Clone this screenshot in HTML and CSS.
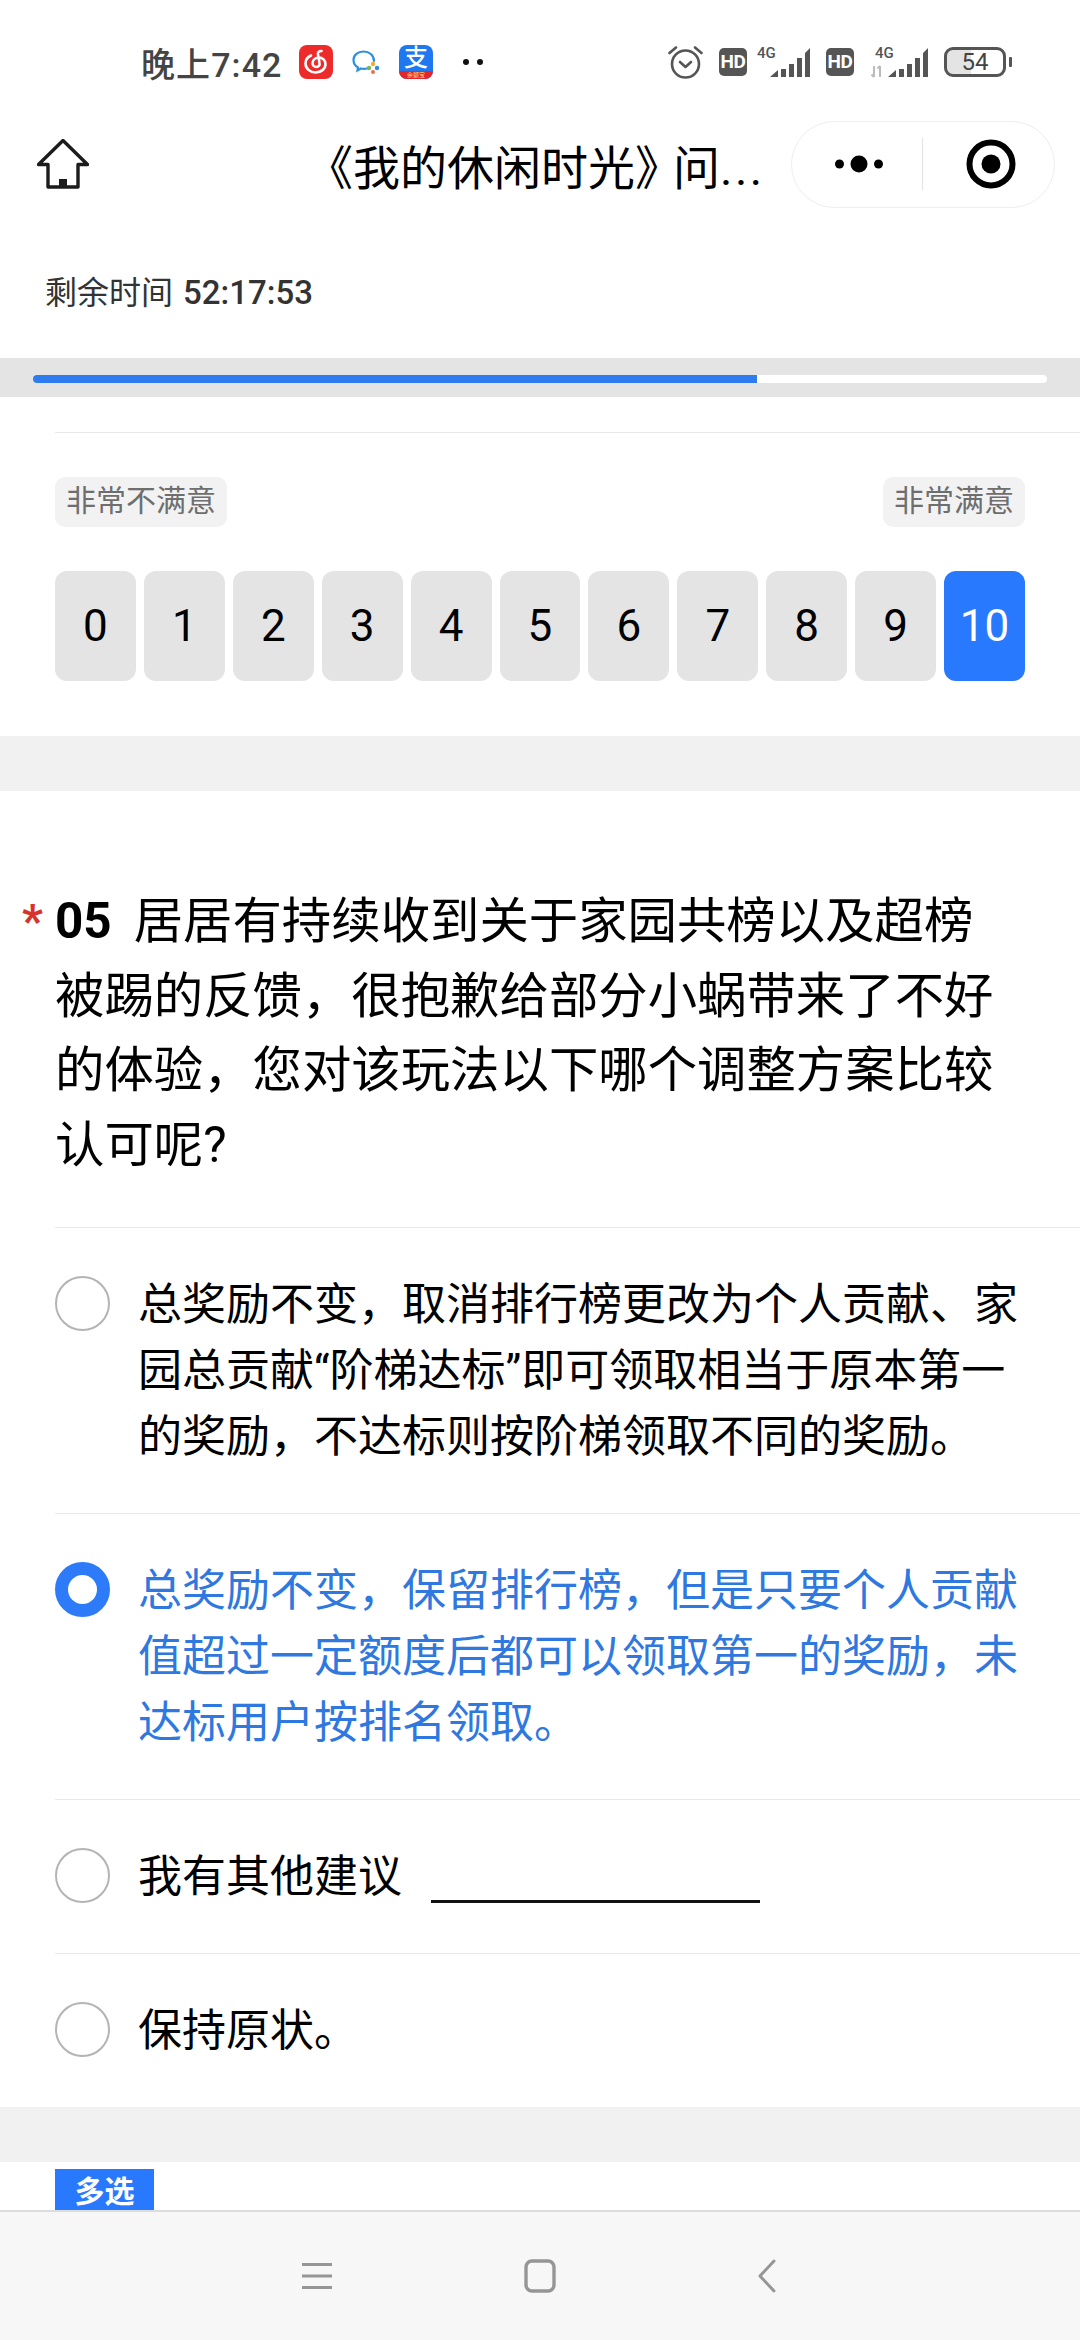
FILE: index.html
```html
<!DOCTYPE html>
<html lang="zh-CN">
<head>
  <meta charset="UTF-8">
  <meta name="viewport" content="width=device-width, initial-scale=1.0">
  <title>《我的休闲时光》问卷</title>
  <link rel="stylesheet" href="styles.css">
</head>
<body>
<div class="status-bar">
  <div class="status-left">
    <span class="clock">晚上7:42</span>
    <svg class="app-icon" width="34" height="34" viewBox="0 0 34 34">
      <rect width="34" height="34" rx="8" fill="#ee2b2b"/>
      <path d="M12 10.500C8.500 12 6.500 15 6.500 18.500c0 5 4.500 9 10 9s10-3.500 10-8.500c0-3.500-3-6.500-6.500-6.500-3.500 0-6.500 2.500-6.500 5.500 0 2.500 1.800 4 3.800 4 2.500 0 3.700-2 3.200-4L19 9.500c-.5-2 .5-3.500 3.500-3.500" fill="none" stroke="#fff" stroke-width="2.600" stroke-linecap="round"/>
    </svg>
    <svg class="bubble-icon" width="28" height="24" viewBox="0 0 28 24">
      <path d="M22 11C22 5 17 1.500 11.500 1.500S1.500 5 1.500 10c0 3.500 2 6 4.500 7.500l-.5 3 3.500-2c2 .4 4 .4 6 0" fill="none" stroke="#2c8fe0" stroke-width="2.200" stroke-linecap="round"/>
      <circle cx="21" cy="14" r="2.200" fill="#f0b030"/>
      <circle cx="25" cy="18" r="2.200" fill="#2c8fe0"/>
      <circle cx="21" cy="22" r="2" fill="#e9704a"/>
      <circle cx="17" cy="18" r="2.200" fill="#76b852"/>
    </svg>
    <div class="alipay">
      <span class="alipay-mark">支</span>
      <span class="alipay-strip">余额宝</span>
    </div>
    <span class="more-dots"><i></i><i></i></span>
  </div>
  <div class="status-right">
    <svg class="alarm" width="35" height="34" viewBox="0 0 35 34">
      <circle cx="17.500" cy="19" r="13.500" fill="none" stroke="#555" stroke-width="2.600"/>
      <path d="M12 17l5.500 5 5.500-5" fill="none" stroke="#555" stroke-width="2.600" stroke-linecap="round" stroke-linejoin="round"/>
      <path d="M1.500 8L8 2.500M33.500 8L27 2.500" fill="none" stroke="#555" stroke-width="2.600" stroke-linecap="round"/>
    </svg>
    <span class="hd">HD</span>
    <svg class="signal" width="53" height="34" viewBox="0 0 53 34">
      <text x="0" y="13" class="net-label">4G</text>
      <path d="M13 32l8-7v7zM24 24h5v8h-5zM32 19h5v13h-5zM40 13h5v19h-5zM48 8l5-5v29h-5z" fill="#555"/>
    </svg>
    <span class="hd hd-second">HD</span>
    <svg class="signal signal-second" width="57" height="34" viewBox="0 0 57 34">
      <text x="4" y="13" class="net-label">4G</text>
      <path d="M3 21v11M0.500 29.500L3 32M9 32V21M6.500 23.500L9 21" fill="none" stroke="#bbb" stroke-width="2"/>
      <path d="M17 32l8-7v7zM28 24h5v8h-5zM36 19h5v13h-5zM44 13h5v19h-5zM52 8l5-5v29h-5z" fill="#555"/>
    </svg>
    <div class="battery">
      <span class="battery-body">54</span>
      <span class="battery-tip"></span>
    </div>
  </div>
</div>

<div class="nav-bar">
  <svg class="home-icon" width="52" height="50" viewBox="0 0 52 50">
    <path d="M26 1.500L1.500 25.500h9.500v22.500h30V25.500h9.500z" fill="none" stroke="#1c1c1c" stroke-width="3.400" stroke-linejoin="round"/>
    <rect x="22" y="40" width="8" height="8" fill="#1c1c1c"/>
  </svg>
  <div class="nav-title">《我的休闲时光<span class="close-quote">》</span>问<span class="title-dots">...</span></div>
  <div class="capsule">
    <div class="capsule-part capsule-more">
      <svg width="48" height="18" viewBox="0 0 48 18">
        <circle cx="4.500" cy="9" r="4.500" fill="#000"/>
        <circle cx="24" cy="9" r="8.500" fill="#000"/>
        <circle cx="43.500" cy="9" r="4.500" fill="#000"/>
      </svg>
    </div>
    <div class="capsule-line"></div>
    <div class="capsule-part capsule-close">
      <svg width="50" height="50" viewBox="0 0 50 50">
        <circle cx="25" cy="25" r="21.500" fill="none" stroke="#000" stroke-width="6"/>
        <circle cx="25" cy="25" r="9.500" fill="#000"/>
      </svg>
    </div>
  </div>
</div>

<div class="timer">剩余时间 <b>52:17:53</b></div>

<div class="progress-band">
  <div class="progress-track">
    <div class="progress-fill" style="width: 71.400%"></div>
  </div>
</div>

<div class="main">
  <section class="card rating-card">
    <div class="rating-labels">
      <span class="pill">非常不满意</span>
      <span class="pill">非常满意</span>
    </div>
    <div class="scale">
      <div class="scale-btn">0</div>
      <div class="scale-btn">1</div>
      <div class="scale-btn">2</div>
      <div class="scale-btn">3</div>
      <div class="scale-btn">4</div>
      <div class="scale-btn">5</div>
      <div class="scale-btn">6</div>
      <div class="scale-btn">7</div>
      <div class="scale-btn">8</div>
      <div class="scale-btn">9</div>
      <div class="scale-btn scale-btn-on">10</div>
    </div>
  </section>

  <section class="card question-card">
    <div class="question">
      <span class="required">*</span>
      <div class="question-text"><b class="question-no">05</b>居居有持续收到关于家园共榜以及超榜被踢的反馈，很抱歉给部分小蜗带来了不好的体验，您对该玩法以下哪个调整方案比较认可呢?</div>
    </div>
    <div class="options">
      <div class="option">
        <span class="radio"></span>
        <div class="option-text">总奖励不变，取消排行榜更改为个人贡献、家园总贡献“阶梯达标”即可领取相当于原本第一的奖励，不达标则按阶梯领取不同的奖励。</div>
      </div>
      <div class="option option-on">
        <span class="radio"></span>
        <div class="option-text">总奖励不变，保留排行榜，但是只要个人贡献值超过一定额度后都可以领取第一的奖励，未达标用户按排名领取。</div>
      </div>
      <div class="option">
        <span class="radio"></span>
        <div class="option-text">我有其他建议</div>
        <span class="fill-line"></span>
      </div>
      <div class="option">
        <span class="radio"></span>
        <div class="option-text">保持原状。</div>
      </div>
    </div>
  </section>

  <section class="card next-card">
    <span class="type-tag">多选</span>
  </section>
</div>

<div class="system-nav">
  <svg width="32" height="28" viewBox="0 0 32 28">
    <path d="M1 2.500h30M1 14h30M1 25.500h30" stroke="#969696" stroke-width="3"/>
  </svg>
  <svg class="nav-square" width="32" height="34" viewBox="0 0 32 34">
    <rect x="2" y="2" width="28" height="30" rx="6" fill="none" stroke="#969696" stroke-width="3.400"/>
  </svg>
  <svg width="20" height="34" viewBox="0 0 20 34">
    <path d="M17 2L3 17l14 15" fill="none" stroke="#969696" stroke-width="3" stroke-linecap="round" stroke-linejoin="round"/>
  </svg>
</div>
</body>
</html>
```

FILE: styles.css
```css
body {
  font-family: Roboto, "Noto Sans CJK SC", sans-serif;
  background-color: #fff;
  color: #000;
  margin: 0;
  padding: 0;
  height: 2340px;
  display: flex;
  flex-direction: column;
  overflow: hidden;
}

/* status bar */
.status-bar {
  height: 120px;
  flex: none;
  display: flex;
  justify-content: space-between;
  align-items: center;
  padding: 4px 68px 0 141px;
  box-sizing: border-box;
}
.status-left,
.status-right {
  display: flex;
  align-items: center;
}
.clock {
  font-size: 34px;
  font-weight: 500;
  letter-spacing: 1.100px;
  color: #444;
  width: 158px;
}
.bubble-icon {
  margin: 0 19px;
}
.alipay {
  width: 34px;
  height: 34px;
  display: flex;
  flex-direction: column;
  align-items: center;
  border-radius: 8px;
  background-color: #1f78f0;
}
.alipay-mark {
  height: 26px;
  color: #fff;
  font-size: 24px;
  font-weight: 500;
  line-height: 26px;
}
.alipay-strip {
  width: 100%;
  height: 8px;
  border-radius: 0 0 8px 8px;
  background-color: #e3262b;
  color: #ffd98a;
  font-size: 6px;
  line-height: 8px;
  text-align: center;
}
.more-dots {
  display: flex;
  gap: 8px;
  margin-left: 30px;
}
.more-dots i {
  width: 6px;
  height: 6px;
  border-radius: 50%;
  background-color: #111;
}
.hd {
  width: 28px;
  height: 28px;
  margin-left: 16px;
  border-radius: 5px;
  background-color: #555;
  color: #fff;
  font-size: 19px;
  font-weight: 700;
  line-height: 28px;
  text-align: center;
  letter-spacing: -0.5px;
}
.signal {
  margin-left: 10px;
}
.hd-second {
  margin-left: 16px;
}
.signal-second {
  margin-left: 17px;
}
.net-label {
  font-size: 15px;
  font-weight: 500;
  fill: #555;
}
.battery {
  display: flex;
  align-items: center;
  gap: 3px;
  margin-left: 16px;
}
.battery-body {
  width: 62px;
  height: 30px;
  box-sizing: border-box;
  border: 3px solid #555;
  border-radius: 9px;
  background: linear-gradient(to right, #e4e4e4 0 24px, #fff 24px);
  background-clip: padding-box;
  color: #444;
  font-size: 24px;
  line-height: 24px;
  text-align: center;
}
.battery-tip {
  width: 3px;
  height: 10px;
  border-radius: 1px;
  background-color: #555;
}

/* title bar */
.nav-bar {
  height: 88px;
  flex: none;
  display: flex;
  align-items: center;
  padding: 0 25px 0 37px;
}
.home-icon {
  flex: none;
}
.nav-title {
  flex: 1;
  font-size: 47px;
  color: #000;
  white-space: nowrap;
  padding-left: 217px;
}
.close-quote {
  letter-spacing: -9px;
}
.title-dots {
  letter-spacing: 2.500px;
}
.capsule {
  width: 264px;
  height: 87px;
  flex: none;
  box-sizing: border-box;
  border: 1px solid #eee;
  border-radius: 44px;
  display: flex;
  align-items: center;
}
.capsule-part {
  flex: 1;
  display: flex;
  justify-content: center;
}
.capsule-more {
  padding-left: 4px;
}
.capsule-close {
  padding-left: 6px;
}
.capsule-line {
  width: 1px;
  height: 52px;
  background-color: #e2e2e2;
}

/* time left and progress */
.timer {
  height: 150px;
  flex: none;
  box-sizing: border-box;
  padding: 65px 0 0 45px;
  font-size: 32px;
  line-height: 40px;
  color: #333;
}
.timer b {
  font-size: 33px;
  font-weight: 500;
  margin-left: 2px;
}
.progress-band {
  height: 39px;
  flex: none;
  box-sizing: border-box;
  padding: 17px 33px 0;
  background-color: #e4e4e4;
}
.progress-track {
  height: 8px;
  border-radius: 4px;
  background-color: #fff;
  overflow: hidden;
}
.progress-fill {
  height: 100%;
  background-color: #2f7bf0;
}

/* survey */
.main {
  flex: 1;
  min-height: 0;
  overflow: hidden;
  background-color: #f1f1f1;
}
.card {
  background-color: #fff;
}
.rating-card {
  margin-bottom: 55px;
  padding: 35px 0 55px 55px;
}
.rating-labels {
  display: flex;
  justify-content: space-between;
  padding: 44px 55px 0 0;
  border-top: 1px solid #e8e8e8;
}
.pill {
  height: 50px;
  padding: 0 11px;
  border-radius: 10px;
  background-color: #f2f2f2;
  color: #6e6e6e;
  font-size: 30px;
  line-height: 48px;
}
.scale {
  display: flex;
  gap: 8px;
  margin-top: 44px;
  padding-right: 55px;
}
.scale-btn {
  flex: 1;
  height: 110px;
  border-radius: 12px;
  background-color: #e4e4e4;
  font-size: 44px;
  line-height: 110px;
  text-align: center;
}
.scale-btn-on {
  background-color: #2979ff;
  color: #fff;
}
.question-card {
  margin-bottom: 55px;
}
.question {
  display: flex;
  padding: 93px 65px 45px 22px;
}
.required {
  width: 33px;
  flex: none;
  color: #d8322c;
  font-size: 46px;
  font-weight: 700;
  line-height: 74px;
}
.question-text {
  font-size: 49.400px;
  line-height: 74.500px;
}
.question-no {
  font-weight: 700;
  margin-right: 22px;
}
.options {
  margin-left: 55px;
}
.option {
  display: flex;
  align-items: flex-start;
  padding: 44px 50px 43px 0;
  border-top: 1px solid #e8e8e8;
}
.option .option-text {
  font-size: 44px;
  line-height: 66px;
  color: #000;
}
.option-on .option-text {
  color: #2f78e0;
}
.radio {
  width: 55px;
  height: 55px;
  flex: none;
  box-sizing: border-box;
  margin: 4px 28px 0 0;
  border: 2px solid #b4b4b4;
  border-radius: 50%;
}
.option-on .radio {
  border: 13px solid #2d7bf8;
}
.fill-line {
  width: 329px;
  height: 3px;
  margin: 56px 0 0 29px;
  background-color: #111;
}
.next-card {
  padding: 7px 0 0 55px;
}
.type-tag {
  display: block;
  width: 99px;
  height: 50px;
  background-color: #2979ff;
  color: #fff;
  font-size: 30px;
  font-weight: 700;
  line-height: 46px;
  text-align: center;
}

/* phone nav */
.system-nav {
  height: 130px;
  flex: none;
  box-sizing: border-box;
  border-top: 2px solid #dcdcdc;
  background-color: #f7f7f7;
  display: flex;
  align-items: center;
  padding: 0 303px 0 301px;
  justify-content: space-between;
}
.nav-square {
  margin-right: 10px;
}
```
